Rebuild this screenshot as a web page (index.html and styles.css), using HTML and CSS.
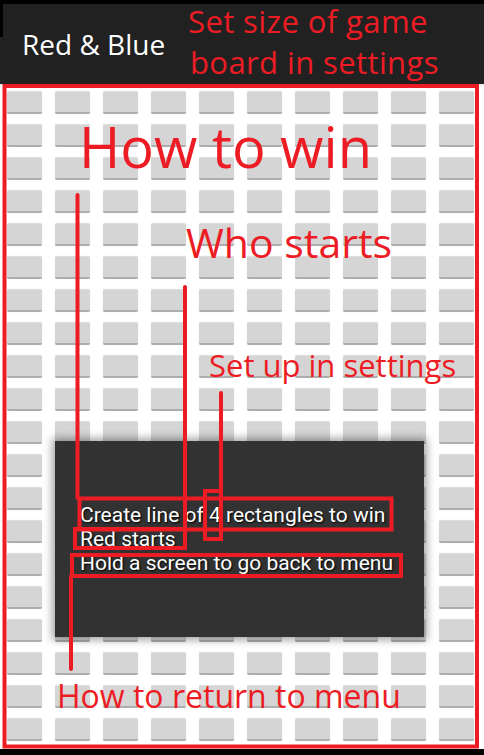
FILE: index.html
```html
<!DOCTYPE html>
<html>
<head>
<meta charset="utf-8">
<title>Red &amp; Blue</title>
<link rel="stylesheet" href="styles.css">
</head>
<body>
<div class="screen">
  <header class="appbar"><span class="title">Red &amp; Blue</span></header>
  <main class="board" id="board"></main>
  <div class="dialog">
    <p>Create line of 4 rectangles to win</p>
    <p>Red starts</p>
    <p>Hold a screen to go back to menu</p>
  </div>
  <svg class="marks" width="484" height="755" viewBox="0 0 484 755">
    <g fill="none" stroke="#ed1c24" stroke-width="4">
      <rect x="4.5" y="86" width="472.5" height="660.5"/>
      <rect x="79.5" y="498.5" width="312" height="31"/>
      <rect x="75" y="529" width="110" height="19"/>
      <rect x="205" y="491" width="16" height="48"/>
      <rect x="72" y="555" width="329" height="21"/>
    </g>
    <g stroke="#ed1c24" stroke-width="4" stroke-linecap="round">
      <line x1="77.5" y1="195" x2="77.5" y2="498"/>
      <line x1="185" y1="287" x2="185" y2="529"/>
      <line x1="221" y1="393" x2="221" y2="491"/>
      <line x1="71" y1="576" x2="71" y2="669"/>
    </g>
  </svg>
  <div class="note note-size"><span class="l1">Set size of game</span><span class="l2">board in settings</span></div>
  <div class="note note-win">How to win</div>
  <div class="note note-who">Who starts</div>
  <div class="note note-setup">Set up in settings</div>
  <div class="note note-return">How to return to menu</div>
</div>
<script src="app.js"></script>
</body>
</html>
```
FILE: styles.css
```css
* { box-sizing: border-box; }
html, body {
  margin: 0;
  padding: 0;
  background: #000;
}
body {
  width: 484px;
  height: 755px;
  overflow: hidden;
}
.screen {
  position: relative;
  width: 484px;
  height: 755px;
  padding-top: 4px;
  display: flex;
  flex-direction: column;
}
.appbar {
  position: relative;
  height: 80px;
  background: #212121;
  padding-left: 22px;
  line-height: 80px;
  flex: none;
}
.appbar::before {
  content: "";
  position: absolute;
  left: 0;
  top: 0;
  width: 3px;
  height: 33px;
  background: #000;
}
.title {
  font-family: "Open Sans", "Noto Sans", sans-serif;
  font-size: 28px;
  color: #fff;
}
.board {
  flex: none;
  height: 665px;
  background: #fff;
  padding: 7px 0 0 7px;
  display: grid;
  grid-template-columns: repeat(10, 35px);
  grid-template-rows: repeat(20, 23px);
  column-gap: 13px;
  row-gap: 10px;
  align-content: start;
  box-shadow: inset 0 3px 4px -2px rgba(0,0,0,0.15);
}
.tile {
  background: #d5d5d5;
  border-radius: 2px;
  border-top: 1px solid #dfdfdf;
  border-bottom: 2px solid #adadad;
  box-shadow: 0 0 1px rgba(0,0,0,0.18);
}
.dialog {
  position: absolute;
  left: 55px;
  top: 441px;
  width: 369px;
  height: 196px;
  background: #323232;
  box-shadow: 0 0 8px 3px rgba(0,0,0,0.35);
  display: flex;
  flex-direction: column;
  justify-content: center;
  padding-left: 25px;
}
.dialog p {
  margin: 0;
  font-family: Roboto, "Noto Sans", sans-serif;
  font-size: 21px;
  line-height: 24px;
  color: #fff;
  text-shadow: 1px 1px 2px #000;
  white-space: nowrap;
}
.marks {
  position: absolute;
  left: 0;
  top: 0;
}
.note {
  position: absolute;
  font-family: "Open Sans", "Noto Sans", sans-serif;
  color: #ed1c24;
  line-height: 1;
  white-space: nowrap;
}
.note-size {
  left: 188px;
  top: 2.6px;
  font-size: 31px;
  line-height: 37px;
  letter-spacing: 0.4px;
}
.note-size .l1,
.note-size .l2 {
  display: block;
}
.note-size .l2 {
  margin-top: 4px;
  padding-left: 2px;
}
.note-win {
  left: 79px;
  top: 118px;
  font-size: 56px;
}
.note-who {
  left: 186px;
  top: 221.5px;
  font-size: 41px;
}
.note-setup {
  left: 209px;
  top: 349.5px;
  font-size: 31px;
}
.note-return {
  left: 57px;
  top: 680px;
  font-size: 32px;
}
```
FILE: app.js
```js
(function () {
  var board = document.getElementById('board');
  for (var i = 0; i < 200; i++) {
    var t = document.createElement('div');
    t.className = 'tile';
    board.appendChild(t);
  }
})();
```
